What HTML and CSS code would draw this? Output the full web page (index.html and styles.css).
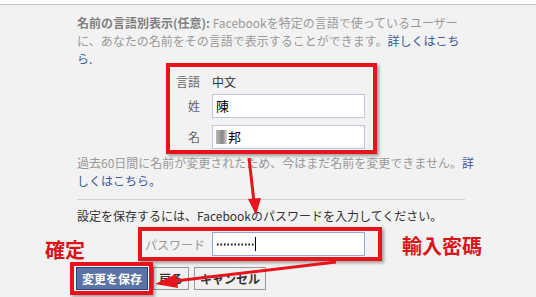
FILE: index.html
```html
<!DOCTYPE html>
<html lang="ja">
<head>
    <meta charset="UTF-8">
    <title>名前の設定</title>
    <link rel="stylesheet" href="styles.css">
</head>
<body>
    <div class="topbar"></div>
    <div class="main">
        <p class="intro"><b>名前の言語別表示(任意):</b> Facebookを特定の言語で使っているユーザーに、あなたの名前をその言語で表示することができます。<a href="#">詳しくはこちら.</a></p>

        <div class="mark name-box">
            <div class="field-grid">
                <span class="label">言語</span>
                <span class="lang">中文</span>
                <span class="label">姓</span>
                <div class="input">陳</div>
                <span class="label">名</span>
                <div class="input"><span class="blur"></span>邦</div>
            </div>
        </div>

        <p class="intro history">過去60日間に名前が変更されたため、今はまだ名前を変更できません。<a href="#">詳しくはこちら。</a></p>

        <hr class="rule">

        <p class="save-note">設定を保存するには、Facebookのパスワードを入力してください。</p>

        <div class="mark pass-box">
            <span class="pass-label">パスワード</span>
            <div class="input focused"><span class="dots"></span><span class="caret"></span></div>
        </div>

        <div class="buttons">
            <button class="btn primary">変更を保存</button>
            <button class="btn">戻る</button>
            <button class="btn">キャンセル</button>
            <div class="mark save-mark"></div>
        </div>
    </div>

    <!-- annotations drawn over the screenshot -->
    <span class="note note-ok">確定</span>
    <span class="note note-pass">輸入密碼</span>
    <svg class="arrows" width="536" height="297" viewBox="0 0 536 297">
        <g fill="#e8141b" stroke="#e8141b">
            <line x1="249" y1="158" x2="254" y2="202" stroke-width="3"/>
            <polygon points="248,199 261,198 256,215" stroke="none"/>
            <line x1="336" y1="262" x2="175" y2="281" stroke-width="3"/>
            <polygon points="176,274 178,288 155,284" stroke="none"/>
        </g>
    </svg>
</body>
</html>
```

FILE: styles.css
```css
body { margin: 0; background: #f2f2f2; font-family: "Noto Sans CJK JP", "Liberation Sans", sans-serif; font-size: 12px; color: #333; position: relative; height: 297px; overflow: hidden; }
.topbar { height: 4px; background: #fff; border-bottom: 1px solid #c2c2c2; }
.main { padding: 9px 0 0 77px; width: 394px; }
.intro { margin: 0; line-height: 18px; color: #999; }
.intro b { color: #808080; }
.intro a { color: #3b5998; text-decoration: none; }
.intro.history { width: 400px; }
.mark { border: 4px solid #e8141b; box-shadow: 2px 2px 3px rgba(0,0,0,0.35); }
.name-box { margin: -5px 0 0 89px; width: 203px; padding: 6px 0 1px; }
.field-grid { display: grid; grid-template-columns: 30px 153px; column-gap: 12px; row-gap: 3px; align-items: center; }
.field-grid .label { text-align: right; color: #666; line-height: 18px; }
.field-grid .input + .label { margin-top: 4px; }
.field-grid .input + .label + .input { margin-top: 4px; }
.lang { color: #333; line-height: 18px; }
.input { box-sizing: border-box; height: 24px; background: #fff; border: 1px solid #bdc7d8; padding: 0 3px; line-height: 22px; color: #000; font-size: 13px; display: flex; align-items: center; }
.blur { width: 11px; height: 14px; background: linear-gradient(90deg, #b8b8b8, #8a8a8a 60%, #d6d6d6); margin-right: 1px; }
.rule { border: 0; border-top: 1px solid #d0d0d0; margin: 9px 0 0; width: 388px; }
.save-note { margin: 7px 0 0; line-height: 18px; color: #333; }
.pass-box { margin: 2px 0 0 61px; width: 236px; padding: 1px 0; display: flex; align-items: center; }
.pass-label { color: #999; width: 67px; padding-left: 3px; }
.pass-box .input { width: 153px; border-color: #8fa9d9; }
.dots { width: 38px; height: 3px; background: radial-gradient(circle, #222 0.9px, transparent 1.3px) 0 0 / 3.5px 3px repeat-x; }
.caret { width: 1px; height: 14px; background: #000; margin-left: 1px; }
.buttons { position: relative; margin: 6px 0 0 -1px; display: flex; gap: 5px; }
.btn { font-family: inherit; font-size: 12px; font-weight: bold; height: 23px; padding: 0 5px; line-height: 19px; background: #f0f0f0; border: 1px solid #999; color: #333; }
.btn.primary { width: 72px; background: #5b74a8; border-color: #29447e; color: #fff; }
.save-mark { position: absolute; left: -6px; top: -5px; width: 75px; height: 25px; box-shadow: 2px 2px 3px rgba(0,0,0,0.35); }
.note { position: absolute; color: #d8141a; font-family: "Noto Sans CJK TC", sans-serif; font-weight: bold; font-size: 20px; line-height: 24px; }
.note-ok { left: 45px; top: 238px; }
.note-pass { left: 402px; top: 234px; }
.arrows { position: absolute; left: 0; top: 0; pointer-events: none; }
```
